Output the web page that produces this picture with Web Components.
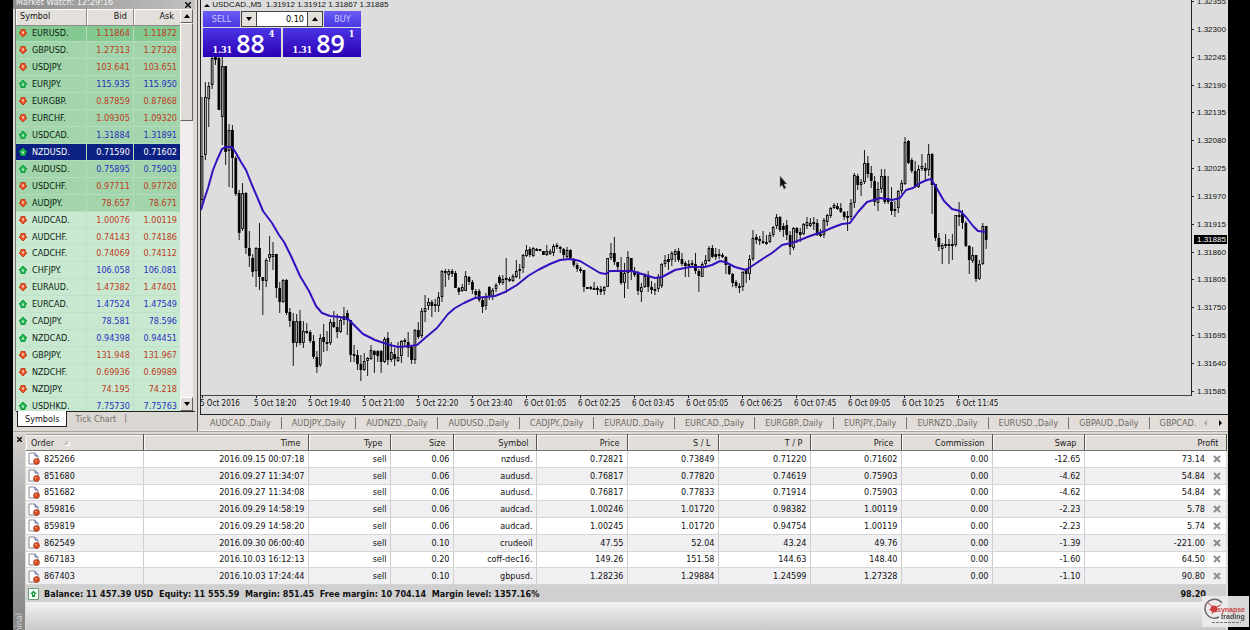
<!DOCTYPE html>
<html lang="en">
<head>
<meta charset="utf-8">
<title>Trading terminal</title>
<style>
    body {
        margin: 0;
        background: #000;
        font-family: "DejaVu Sans Condensed", "DejaVu Sans", sans-serif;
        font-size: 9px;
        line-height: 12px;
        color: #111;
    }
</style>
</head>
<body>
<trading-terminal>
    <market-watch slot="watch"></market-watch>
    <price-chart slot="chart">
        <quote-panel volume="0.10" sell="1.31 88 4" buy="1.31 89 1"></quote-panel>
    </price-chart>
    <chart-tabs slot="tabs"></chart-tabs>
    <orders-panel slot="orders"></orders-panel>
</trading-terminal>
<brand-badge></brand-badge>

<script>
/**
 * Base class: renders the component markup into an open shadow root
 */
class BaseElement extends HTMLElement {
    constructor() {
        super();
        this.attachShadow({ mode: 'open' });
    }

    connectedCallback() {
        this.shadowRoot.innerHTML = this.template();
    }
}

/**
 * TradingTerminal - application frame
 */
class TradingTerminal extends BaseElement {
    template() {
        return `
            <style>
                :host {
                    display: flex;
                    flex-direction: column;
                    min-height: 100vh;
                    margin: 0 22px 0 13px;
                    background: #dedad4;
                }
                .top {
                    display: grid;
                    grid-template-columns: 182px minmax(0, 1fr);
                    border-bottom: 1px solid #a8a5a1;
                }
                .workspace {
                    display: flex;
                    flex-direction: column;
                    margin-left: 2px;
                    border-left: 1px solid #555;
                }
                ::slotted([slot="orders"]) {
                    flex: 1;
                }
            </style>
            <div class="top">
                <slot name="watch"></slot>
                <div class="workspace">
                    <slot name="chart"></slot>
                    <slot name="tabs"></slot>
                </div>
            </div>
            <slot name="orders"></slot>
        `;
    }
}

/**
 * MarketWatch - symbol list with bid and ask prices
 */
class MarketWatch extends BaseElement {
    // symbol, bid, ask, direction
    static quotes = [
        ['EURUSD.', '1.11864', '1.11872', 'down'],
        ['GBPUSD.', '1.27313', '1.27328', 'down'],
        ['USDJPY.', '103.641', '103.651', 'down'],
        ['EURJPY.', '115.935', '115.950', 'up'],
        ['EURGBP.', '0.87859', '0.87868', 'down'],
        ['EURCHF.', '1.09305', '1.09320', 'down'],
        ['USDCAD.', '1.31884', '1.31891', 'up'],
        ['NZDUSD.', '0.71590', '0.71602', 'up'],
        ['AUDUSD.', '0.75895', '0.75903', 'up'],
        ['USDCHF.', '0.97711', '0.97720', 'down'],
        ['AUDJPY.', '78.657', '78.671', 'down'],
        ['AUDCAD.', '1.00076', '1.00119', 'down'],
        ['AUDCHF.', '0.74143', '0.74186', 'down'],
        ['CADCHF.', '0.74069', '0.74112', 'down'],
        ['CHFJPY.', '106.058', '106.081', 'up'],
        ['EURAUD.', '1.47382', '1.47401', 'down'],
        ['EURCAD.', '1.47524', '1.47549', 'up'],
        ['CADJPY.', '78.581', '78.596', 'up'],
        ['NZDCAD.', '0.94398', '0.94451', 'up'],
        ['GBPJPY.', '131.948', '131.967', 'down'],
        ['NZDCHF.', '0.69936', '0.69989', 'down'],
        ['NZDJPY.', '74.195', '74.218', 'down'],
        ['USDHKD.', '7.75730', '7.75763', 'up']
    ];

    arrow(direction) {
        const flip = direction === 'down' ? ' transform="rotate(180 5 5)"' : '';
        const fill = direction === 'down' ? '#e8582c' : '#22b853';
        const stroke = direction === 'down' ? '#c4401a' : '#149a42';
        return `
            <svg width="10" height="10" viewBox="0 0 10 10" aria-hidden="true">
                <g${flip}>
                    <path d="M5 1 L9 5 L7.500 5.500 L7 8.500 L3 8.500 L2.500 5.500 L1 5 Z" fill="${fill}" stroke="${stroke}" stroke-linejoin="round"/>
                    <path d="M4 4.500 H6 V6.500 H4 Z" fill="#fff" opacity=".7"/>
                </g>
            </svg>`;
    }

    template() {
        const rows = MarketWatch.quotes.map(([symbol, bid, ask, direction], index) => {
            const band = index === 0 ? 'first' : index < 11 ? 'major' : 'minor';
            const selected = symbol === 'NZDUSD.' ? ' selected' : '';
            return `
                <tr class="${band} ${direction}${selected}">
                    <td><span class="symbol">${this.arrow(direction)}${symbol}</span></td>
                    <td>${bid}</td>
                    <td>${ask}</td>
                </tr>`;
        }).join('');

        return `
            <style>
                :host {
                    display: flex;
                    flex-direction: column;
                    background: #dbd7d2;
                }
                header {
                    display: flex;
                    justify-content: space-between;
                    height: 9px;
                    padding: 0 4px 0 3px;
                    overflow: hidden;
                    line-height: 5px;
                    color: #f4f4f4;
                    background: linear-gradient(90deg, #8c8c8c, #c4c2c0);
                }
                button {
                    padding: 0;
                    border: 0;
                    background: none;
                    font: inherit;
                    color: #111;
                    display: flex;
                    align-items: center;
                    justify-content: center;
                }
                .list {
                    display: flex;
                    height: 402px;
                    margin: 0 2px;
                    overflow: hidden;
                    border-left: 1px solid #77746f;
                }
                table {
                    flex: 1;
                    height: 406px;
                    table-layout: fixed;
                    border-collapse: collapse;
                }
                .wide { width: 70px; }
                th {
                    height: 16px;
                    padding: 0 6px 2px 4px;
                    box-sizing: border-box;
                    font-weight: normal;
                    text-align: right;
                    background: #e3dfda;
                    border-right: 1px solid #8f8b86;
                    border-bottom: 1px solid #8f8b86;
                    box-shadow: inset 1px 1px #fff;
                }
                th:first-child { text-align: left; }
                td {
                    padding: 0 3px 0 2px;
                    text-align: right;
                    line-height: 12px;
                    border-right: 1px solid #b4dcbc;
                    border-bottom: 1px solid #b4dcbc;
                }
                td:last-child, th:last-child { border-right: 0; }
                .symbol {
                    display: flex;
                    align-items: center;
                    gap: 4px;
                    color: #0c1c12;
                }
                .first { background: #83c991; }
                .major { background: #a2d5ab; }
                .minor { background: #c8e8d0; }
                .minor td { border-color: #c0e1c9; }
                .down { color: #bf3a24; }
                .up { color: #2b30c0; }
                .selected { background: #0b2183; }
                .selected, .selected .symbol { color: #fff; }
                .scroll {
                    width: 13px;
                    display: flex;
                    flex-direction: column;
                    background: #f1edef;
                }
                .scroll button, .thumb {
                    background: #dfdbd6;
                    border: 1px solid;
                    border-color: #fff #66635f #66635f #fff;
                }
                .scroll button { height: 14px; }
                .thumb { height: 96px; }
                .track { flex: 1; }
                nav {
                    display: flex;
                    align-items: flex-start;
                    flex: 1;
                    margin-left: 3px;
                    border-top: 1px solid #222;
                    color: #75716c;
                }
                nav a {
                    padding: 1px 8px;
                    color: inherit;
                    text-decoration: none;
                }
                nav a.active {
                    margin: -1px 0 0 1px;
                    padding: 2px 7px 1px;
                    color: #111;
                    background: #fff;
                    border: 1px solid #222;
                    border-top: 0;
                }
            </style>
            <header>
                <span>Market Watch: 12:29:16</span>
                <button aria-label="Close market watch">
                    <svg width="6" height="6" viewBox="0 0 6 6"><path d="M0 0 L6 6 M6 0 L0 6" stroke="#111" stroke-width="1.5"/></svg>
                </button>
            </header>
            <div class="list">
                <table>
                    <colgroup><col class="wide"><col><col></colgroup>
                    <thead><tr><th>Symbol</th><th>Bid</th><th>Ask</th></tr></thead>
                    <tbody>${rows}</tbody>
                </table>
                <div class="scroll">
                    <button aria-label="Scroll up"><svg width="6" height="4" viewBox="0 0 6 4"><path d="M0 4 L3 0 L6 4 Z"/></svg></button>
                    <div class="thumb"></div>
                    <div class="track"></div>
                    <button aria-label="Scroll down"><svg width="6" height="4" viewBox="0 0 6 4"><path d="M0 0 L3 4 L6 0 Z"/></svg></button>
                </div>
            </div>
            <nav>
                <a href="#symbols" class="active">Symbols</a>
                <a href="#ticks">Tick Chart</a>
                <span>|</span>
            </nav>
        `;
    }
}

/**
 * QuotePanel - one click trading panel
 */
class QuotePanel extends BaseElement {
    price(side) {
        const [base, pips, point] = this.getAttribute(side).split(' ');
        return `
            <button class="price" aria-label="${side} at market">
                <span class="base">${base}</span><span class="pips">${pips}</span><span class="point">${point}</span>
            </button>`;
    }

    template() {
        return `
            <style>
                :host {
                    display: grid;
                    grid-template-columns: minmax(0, 1fr) minmax(0, 1fr);
                    gap: 1px 2px;
                    width: 158px;
                }
                .controls {
                    grid-column: 1 / 3;
                    display: grid;
                    grid-template-columns: 37px minmax(0, 1fr) 37px;
                    gap: 1px;
                    height: 16px;
                }
                button {
                    padding: 0;
                    border: 0;
                    font: inherit;
                }
                .side {
                    color: #cfcaff;
                    background: linear-gradient(#6a5cf8, #4a38e2);
                }
                .volume {
                    display: flex;
                    border: 1px solid #444;
                    background: #fff;
                }
                .volume button {
                    flex: none;
                    width: 14px;
                    background: #e4e0dc;
                    display: flex;
                    align-items: center;
                    justify-content: center;
                }
                input {
                    flex: 1;
                    width: 0;
                    min-width: 0;
                    padding: 0 3px;
                    border: 0;
                    border-left: 1px solid #444;
                    border-right: 1px solid #444;
                    font: inherit;
                    text-align: right;
                    background: #fff;
                }
                .price {
                    display: flex;
                    align-items: flex-end;
                    justify-content: center;
                    gap: 4px;
                    height: 29px;
                    padding-left: 3px;
                    color: #fff;
                    background: linear-gradient(#4a35e4, #2c00b4);
                }
                .base {
                    font-family: "DejaVu Serif Condensed", "DejaVu Serif", serif;
                    font-weight: bold;
                    line-height: 14px;
                }
                .pips {
                    font-family: "Open Sans", "Noto Sans", sans-serif;
                    font-weight: 600;
                    font-size: 25px;
                    line-height: 28px;
                }
                .point {
                    align-self: flex-start;
                    font-family: "DejaVu Serif Condensed", "DejaVu Serif", serif;
                    font-weight: bold;
                }
            </style>
            <div class="controls">
                <button class="side">SELL</button>
                <div class="volume">
                    <button aria-label="Decrease volume"><svg width="6" height="4" viewBox="0 0 6 4"><path d="M0 0 L3 4 L6 0 Z"/></svg></button>
                    <input aria-label="Volume" value="${this.getAttribute('volume')}">
                    <button aria-label="Increase volume"><svg width="6" height="4" viewBox="0 0 6 4"><path d="M0 4 L3 0 L6 4 Z"/></svg></button>
                </div>
                <button class="side">BUY</button>
            </div>
            ${this.price('sell')}
            ${this.price('buy')}
        `;
    }
}

/**
 * PriceChart - candlestick chart with moving average and axes
 */
class PriceChart extends BaseElement {
    static step = 3.38;

    // Candles as high, body top, body bottom, low, with + for a rising bar
    static candles = `
        97 156 200 205 +;82 97 155 160 +;82 86 99 127 +;57 58 85 89 +;57 57 60 65 -;57 58 110 110 -;57 66 117 145 +;66 66 152 165 -;
        124 130 151 187 +;125 130 158 188 -;156 158 194 196 -;190 193 233 240 -;183 193 229 231 +;192 193 248 254 -;231 248 256 267 -;
        254 258 272 277 -;247 248 271 287 +;223 248 277 290 -;277 277 281 315 -;258 260 281 287 +;236 254 258 262 +;242 254 257 270 +;
        254 254 288 298 -;282 288 302 313 -;279 280 302 303 +;279 280 313 315 -;308 312 321 327 -;313 321 343 366 -;314 321 343 347 +;
        310 321 343 345 -;321 331 343 348 +;323 331 332 334 -;330 332 341 343 -;335 341 357 359 -;351 357 367 373 -;334 338 365 367 +;
        324 337 342 352 -;331 342 343 351 -;319 322 343 345 +;311 322 327 328 -;314 327 332 338 -;316 320 332 333 +;307 316 320 325 +;
        310 313 320 335 -;320 320 355 362 -;345 354 355 362 -;350 355 364 370 -;355 364 370 381 -;353 361 370 371 +;357 358 361 376 +;
        345 350 359 360 +;350 351 355 373 -;350 351 356 362 -;350 351 362 373 -;337 339 362 363 +;332 338 360 365 -;342 352 360 362 +;
        348 354 359 366 -;342 357 361 362 +;340 341 356 363 +;338 340 342 347 -;332 342 348 357 -;346 347 360 364 -;329 330 360 364 +;
        322 330 337 339 -;308 311 336 338 +;295 308 312 322 +;298 302 306 310 +;300 302 306 317 -;299 304 306 312 -;292 297 306 312 +;
        270 271 297 302 +;269 271 273 287 -;269 271 275 280 +;269 271 274 277 -;271 273 288 288 -;287 288 292 295 -;284 287 291 292 +;
        271 276 291 291 +;276 277 282 285 -;280 282 290 294 -;289 291 295 297 -;289 291 300 302 -;297 300 307 313 -;293 297 306 310 +;
        286 287 296 300 -;288 290 297 300 +;283 285 289 292 +;275 277 283 285 -;275 279 283 285 +;258 278 280 293 -;277 279 281 282 +;
        274 276 281 282 +;260 271 277 278 +;264 269 271 279 -;254 255 268 273 +;245 250 256 257 +;247 249 255 257 -;247 248 256 257 +;
        248 249 250 251 -;249 249 251 251 -;251 251 255 255 -;245 251 255 256 +;249 251 254 255 +;244 246 253 256 +;243 245 247 249 -;
        246 247 249 253 -;248 249 255 260 -;247 250 257 259 +;249 250 258 260 -;258 259 265 267 -;263 265 269 272 -;267 269 271 273 -;
        270 270 287 292 -;287 287 289 289 -;286 287 289 290 -;282 288 289 290 -;286 288 290 295 -;286 289 292 295 -;286 287 291 295 +;
        258 258 287 287 +;243 253 258 260 +;237 253 262 265 -;262 262 267 270 -;257 271 283 285 -;263 273 283 298 +;251 257 273 289 +;
        258 258 271 280 -;267 271 275 277 -;271 274 291 295 -;283 287 292 302 +;273 276 287 288 +;271 275 287 292 -;281 287 290 294 -;
        283 289 291 295 +;274 277 289 292 +;263 264 286 288 +;255 260 264 267 +;254 259 262 270 -;251 253 260 266 +;249 251 255 262 +;
        248 251 260 262 -;253 259 264 266 -;261 263 266 277 -;260 264 266 277 +;260 263 265 268 -;253 264 271 274 -;269 271 276 292 -;
        262 264 277 277 +;255 260 264 268 +;246 248 261 262 +;245 248 257 258 -;248 254 257 260 -;249 254 256 259 -;253 255 256 258 -;
        256 257 265 274 -;265 266 274 275 -;273 274 283 287 -;280 282 286 288 -;283 286 288 293 -;271 272 287 291 +;268 270 274 283 -;
        255 259 274 280 +;230 238 259 261 +;234 237 240 244 -;236 239 241 245 -;231 241 242 244 -;235 242 243 245 -;232 235 242 243 +;
        226 227 235 237 +;214 217 226 229 +;216 217 230 232 -;223 226 230 237 -;220 225 235 240 -;231 235 247 255 -;227 228 248 250 +;
        227 228 233 243 -;228 232 235 242 -;223 224 234 235 +;217 222 226 229 +;218 223 226 227 +;217 222 224 230 -;219 223 235 236 -;
        229 234 236 237 -;218 220 235 238 +;214 215 222 226 +;207 208 216 218 +;203 205 208 209 +;203 206 209 210 -;203 208 212 213 -;
        211 212 217 220 -;211 216 218 231 -;199 203 217 220 +;173 175 203 208 +;174 176 185 190 -;179 182 185 196 +;150 163 182 184 +;
        156 163 174 178 -;166 173 181 188 -;176 181 202 206 -;182 189 203 211 +;169 176 189 193 +;169 176 202 204 -;176 198 202 204 -;
        187 202 211 215 -;201 209 211 217 -;190 191 208 213 +;180 183 191 194 +;137 142 184 185 +;140 141 163 164 -;158 160 171 173 -;
        161 171 187 188 -;165 169 187 188 +;154 166 169 171 +;163 168 171 180 -;144 154 170 176 +;153 154 185 214 -;184 184 238 241 -;
        233 238 247 251 -;243 245 249 264 +;234 244 246 248 -;239 244 246 264 -;234 244 245 260 -;215 215 245 247 +;202 215 216 226 -;
        210 214 223 229 -;221 223 246 247 -;245 246 260 274 -;247 255 261 263 +;255 255 279 282 -;260 264 279 280 +;223 226 264 265 +;
        226 226 240 249 -`;

    static average = `0,210 3,200 7,188 12,170 16,160 21,149 25,147 31,147 35,153 40,162 45,170 51,185 57,199 62,211
        71,223 78,235 83,242 90,256 99,276 108,291 115,306 121,313 129,316 139,317 147,319 154,326 162,334 174,340
        189,345 197,347 209,346 216,345 224,338 236,328 247,314 254,308 263,303 274,298 294,296 304,292 316,285
        327,276 337,270 349,264 359,260 369,259 379,261 389,267 399,273 405,274 409,271 431,271 444,275 454,278
        461,277 474,270 489,267 504,267 511,265 519,261 524,262 534,267 545,270 554,264 563,258 571,253 581,245
        594,242 609,236 621,232 633,227 641,224 649,223 657,212 666,202 679,198 691,200 699,198 705,190 712,188
        719,183 726,180 730,179 735,187 743,201 751,209 759,211 765,217 772,226 777,231 785,232`;

    static times = ['5 Oct 2016', '5 Oct 18:20', '5 Oct 19:40', '5 Oct 21:00', '5 Oct 22:20',
        '5 Oct 23:40', '6 Oct 01:05', '6 Oct 02:25', '6 Oct 03:45', '6 Oct 05:05',
        '6 Oct 06:25', '6 Oct 07:45', '6 Oct 09:05', '6 Oct 10:25', '6 Oct 11:45'];

    static prices = ['1.32355', '1.32300', '1.32245', '1.32190', '1.32135', '1.32080', '1.32025',
        '1.31970', '1.31915', '1.31860', '1.31805', '1.31750', '1.31695', '1.31640', '1.31585'];

    drawCandles() {
        let wicks = '';
        let bodies = '';
        PriceChart.candles.split(';').forEach((candle, index) => {
            const [high, top, bottom, low, sign] = candle.trim().split(' ');
            const x = index * PriceChart.step + 1;
            wicks += `M${x.toFixed(2)} ${high}V${low}`;
            bodies += `<rect x="${(x - 0.9).toFixed(2)}" y="${+top + 0.5}" width="1.8" height="${Math.max(bottom - top - 1, 1)}"
                fill="${sign === '+' ? '#d0d0d0' : '#000'}"/>`;
        });
        return `<g stroke="#000" stroke-width=".9" fill="none"><path d="${wicks}"/>${bodies}</g>`;
    }

    template() {
        return `
            <style>
                :host {
                    display: grid;
                    grid-template-columns: minmax(0, 1fr) 36px;
                    grid-template-rows: 396px 18px;
                    margin-left: 2px;
                    border-left: 1px solid #222;
                    border-bottom: 1px solid #222;
                    background: #dddddd;
                }
                .plot {
                    position: relative;
                    border-bottom: 1px solid #444;
                    border-right: 1px solid #222;
                }
                .plot > svg {
                    display: block;
                    width: 100%;
                    height: 100%;
                }
                .info {
                    position: absolute;
                    top: 0;
                    left: 2px;
                    font-size: 8px;
                    line-height: 10px;
                    white-space: pre;
                    font-family: "Liberation Sans", sans-serif;
                }
                ::slotted(quote-panel) {
                    position: absolute;
                    top: 11px;
                    left: 2px;
                }
                .cursor {
                    position: absolute;
                    top: 176px;
                    left: 578px;
                }
                ul {
                    margin: 0;
                    padding: 0;
                    list-style: none;
                    font-size: 8px;
                }
                .prices {
                    position: relative;
                    height: 401px;
                    margin-top: -4px;
                    display: flex;
                    flex-direction: column;
                    justify-content: space-between;
                    font-family: "Liberation Sans", sans-serif;
                    line-height: 11px;
                }
                .prices li {
                    display: flex;
                    align-items: center;
                    gap: 3px;
                }
                .prices li::before {
                    content: '';
                    width: 2px;
                    height: 1px;
                    background: #222;
                }
                .prices .current {
                    position: absolute;
                    top: 239px;
                    left: 2px;
                    right: 1px;
                    padding-left: 3px;
                    line-height: 9px;
                    color: #fff;
                    background: #000;
                }
                .prices .current::before { content: none; }
                .times {
                    display: grid;
                    grid-auto-flow: column;
                    grid-auto-columns: 54px;
                    margin-left: -1px;
                    white-space: nowrap;
                    line-height: 11px;
                }
                .times li::before {
                    content: '';
                    display: block;
                    width: 1px;
                    height: 2px;
                    margin-left: 2px;
                    background: #222;
                }
            </style>
            <div class="plot">
                <svg role="img" aria-label="USDCAD five minute chart">
                    ${this.drawCandles()}
                    <polyline points="${PriceChart.average}" fill="none" stroke="#3610bd" stroke-width="2"
                        stroke-linejoin="round"/>
                </svg>
                <div class="info"><svg width="7" height="4" viewBox="0 0 7 4"><path d="M1 4 L4 1 L7 4 Z"/></svg> USDCAD.,M5  1.31912 1.31912 1.31867 1.31885</div>
                <slot></slot>
                <svg class="cursor" style="width:9px;height:14px" viewBox="0 0 9 14" aria-hidden="true">
                    <path d="M1 0 V11 L3 9 L5 13 L7 12 L5 8 H8 Z" fill="#111" stroke="#999" stroke-width=".5"/>
                </svg>
            </div>
            <ul class="prices">
                ${PriceChart.prices.map(price => `<li>${price}</li>`).join('')}
                <li class="current">1.31885</li>
            </ul>
            <ul class="times">
                ${PriceChart.times.map(time => `<li>${time}</li>`).join('')}
            </ul>
        `;
    }
}

/**
 * ChartTabs - strip of open charts
 */
class ChartTabs extends BaseElement {
    static tabs = ['AUDCAD.,Daily', 'AUDJPY.,Daily', 'AUDNZD.,Daily', 'AUDUSD.,Daily', 'CADJPY.,Daily',
        'EURAUD.,Daily', 'EURCAD.,Daily', 'EURGBP.,Daily', 'EURJPY.,Daily', 'EURNZD.,Daily',
        'EURUSD.,Daily', 'GBPAUD.,Daily', 'GBPCAD.'];

    template() {
        return `
            <style>
                :host {
                    display: flex;
                    align-items: center;
                    height: 15px;
                    padding-left: 2px;
                    border-bottom: 1px solid #f6f4f2;
                    background: #e2ddd8;
                }
                nav {
                    display: flex;
                    flex: 1;
                    min-width: 0;
                    overflow: hidden;
                    white-space: nowrap;
                }
                a {
                    padding: 0 10px;
                    color: #6e6a66;
                    text-decoration: none;
                    border-right: 1px solid #77736e;
                }
                a:last-child {
                    padding-right: 0;
                    border: 0;
                }
                button {
                    flex: none;
                    width: 15px;
                    padding: 0;
                    border: 0;
                    background: none;
                    display: flex;
                    justify-content: center;
                }
            </style>
            <nav>${ChartTabs.tabs.map(tab => `<a href="#${tab}">${tab}</a>`).join('')}</nav>
            <button aria-label="Previous charts"><svg width="3" height="6" viewBox="0 0 3 6"><path d="M3 0 L0 3 L3 6 Z" fill="#aaa6a2"/></svg></button>
            <button aria-label="Next charts"><svg width="3" height="6" viewBox="0 0 3 6"><path d="M0 0 L3 3 L0 6 Z"/></svg></button>
        `;
    }
}

/**
 * OrdersPanel - open positions and account summary
 */
class OrdersPanel extends BaseElement {
    static columns = [['Order', 117], ['Time', 165], ['Type', 82], ['Size', 63], ['Symbol', 83], ['Price', 91],
        ['S / L', 91], ['T / P', 92], ['Price', 91], ['Commission', 91], ['Swap', 92], ['Profit', 142]];

    static orders = [
        ['825266', '2016.09.15 00:07:18', 'sell', '0.06', 'nzdusd.', '0.72821', '0.73849', '0.71220', '0.71602', '0.00', '-12.65', '73.14'],
        ['851680', '2016.09.27 11:34:07', 'sell', '0.06', 'audusd.', '0.76817', '0.77820', '0.74619', '0.75903', '0.00', '-4.62', '54.84'],
        ['851682', '2016.09.27 11:34:08', 'sell', '0.06', 'audusd.', '0.76817', '0.77833', '0.71914', '0.75903', '0.00', '-4.62', '54.84'],
        ['859816', '2016.09.29 14:58:19', 'sell', '0.06', 'audcad.', '1.00246', '1.01720', '0.98382', '1.00119', '0.00', '-2.23', '5.78'],
        ['859819', '2016.09.29 14:58:20', 'sell', '0.06', 'audcad.', '1.00245', '1.01720', '0.94754', '1.00119', '0.00', '-2.23', '5.74'],
        ['862549', '2016.09.30 06:00:40', 'sell', '0.10', 'crudeoil', '47.55', '52.04', '43.24', '49.76', '0.00', '-1.39', '-221.00'],
        ['867183', '2016.10.03 16:12:13', 'sell', '0.20', 'coff-dec16.', '149.26', '151.58', '144.63', '148.40', '0.00', '-1.60', '64.50'],
        ['867403', '2016.10.03 17:24:44', 'sell', '0.10', 'gbpusd.', '1.28236', '1.29884', '1.24599', '1.27328', '0.00', '-1.10', '90.80']
    ];

    row(order) {
        const [id, ...cells] = order;
        const profit = cells.pop();
        return `
            <tr>
                <td><span class="order">
                    <svg width="12" height="13" viewBox="0 0 12 13" aria-hidden="true">
                        <path d="M1 1 H7 L10 4 V12 H1 Z" fill="#fff" stroke="#8a8a98"/>
                        <path d="M7 1 V4 H10" fill="#cdd3ea" stroke="#5b6a9a"/>
                        <circle cx="8.5" cy="9.5" r="3" fill="#dc4a20" stroke="#a02c0a" stroke-width=".6"/>
                        <circle cx="7.8" cy="8.6" r=".9" fill="#f6a78c"/>
                    </svg>${id}</span></td>
                ${cells.map(cell => `<td>${cell}</td>`).join('')}
                <td><span class="profit">${profit}
                    <button aria-label="Close order ${id}">
                        <svg width="8" height="8" viewBox="0 0 8 8"><path d="M1 1 L7 7 M7 1 L1 7" stroke="#8e8e8e" stroke-width="2"/></svg>
                    </button></span></td>
            </tr>`;
    }

    template() {
        return `
            <style>
                :host {
                    display: grid;
                    grid-template-columns: 12px minmax(0, 1fr);
                    padding: 2px 2px 0 0;
                }
                aside {
                    display: flex;
                    flex-direction: column;
                    align-items: center;
                    justify-content: space-between;
                    overflow: hidden;
                    background: linear-gradient(#d4d1ce, #b4b4b4 30%, #858585);
                }
                aside span {
                    height: 17px;
                    writing-mode: vertical-rl;
                    transform: rotate(180deg);
                    display: flex;
                    justify-content: flex-end;
                    color: #d4d4d4;
                }
                button {
                    padding: 0;
                    border: 0;
                    background: none;
                    display: flex;
                }
                aside button { padding: 3px; }
                main {
                    display: flex;
                    flex-direction: column;
                    margin-left: 1px;
                    background: #fff;
                }
                table {
                    width: 100%;
                    height: 151px;
                    table-layout: fixed;
                    border-collapse: collapse;
                }
                th {
                    height: 16px;
                    padding: 0 7px 0 5px;
                    box-sizing: border-box;
                    font-weight: normal;
                    text-align: right;
                    color: #222;
                    background: #e1ddd8;
                    border-top: 1px solid #a09d98;
                    border-right: 1px solid #55524e;
                    border-bottom: 1px solid #77746f;
                    box-shadow: inset 1px 1px #faf8f6;
                }
                td {
                    padding: 0 3px;
                    text-align: right;
                    border-right: 1px solid #cfcfcf;
                    border-bottom: 1px solid #d6d6d6;
                }
                td:first-child { padding-left: 2px; }
                th:first-child { text-align: left; }
                td:last-child { border-right: 0; }
                tbody tr:nth-child(even) { background: #f0eff1; }
                .order, .profit {
                    display: flex;
                    align-items: center;
                    gap: 4px;
                }
                .profit {
                    justify-content: flex-end;
                    gap: 8px;
                    padding-right: 2px;
                }
                .sort { margin-left: 10px; }
                .summary {
                    display: flex;
                    align-items: center;
                    gap: 5px;
                    height: 17px;
                    padding: 0 20px 0 2px;
                    font-weight: bold;
                    background: #d0d0d0;
                }
                .summary p {
                    flex: 1;
                    margin: 0;
                    white-space: pre;
                }
                .rest {
                    flex: 1;
                    min-height: 20px;
                    background: linear-gradient(#f2f2f2, #c9c9c9);
                }
            </style>
            <aside>
                <button aria-label="Close terminal">
                    <svg width="5" height="5" viewBox="0 0 5 5"><path d="M0 0 L5 5 M5 0 L0 5" stroke="#111" stroke-width="1.5"/></svg>
                </button>
                <span>Terminal</span>
            </aside>
            <main>
                <table>
                    <colgroup>${OrdersPanel.columns.map(([, width]) => `<col style="width:${width}px">`).join('')}</colgroup>
                    <thead><tr>${OrdersPanel.columns.map(([name], index) => `<th>${name}${index === 0
                        ? '<svg class="sort" width="7" height="6" viewBox="0 0 7 6"><path d="M1 5 L4 1" stroke="#999"/><path d="M4 1 L6.500 5.500 H1" stroke="#fff" fill="none"/></svg>'
                        : ''}</th>`).join('')}</tr></thead>
                    <tbody>${OrdersPanel.orders.map(order => this.row(order)).join('')}</tbody>
                </table>
                <div class="summary">
                    <svg width="11" height="12" viewBox="0 0 11 12" aria-hidden="true">
                        <path d="M.5 .5 H10.5 V11.500 H.5 Z" fill="#f6fff8" stroke="#6e9c78"/>
                        <path d="M5.500 2.500 L9 6 H7 V9 H4 V6 H2 Z" fill="#169c3e"/>
                        <path d="M5 5 H6 V7 H5 Z" fill="#fff"/>
                    </svg>
                    <p>Balance: 11 457.39 USD  Equity: 11 555.59  Margin: 851.45  Free margin: 10 704.14  Margin level: 1357.16%</p>
                    <span>98.20</span>
                </div>
                <div class="rest"></div>
            </main>
        `;
    }
}

/**
 * BrandBadge - logo floating over the lower right corner
 */
class BrandBadge extends BaseElement {
    template() {
        return `
            <style>
                :host {
                    position: fixed;
                    right: 1px;
                    bottom: 3px;
                    width: 47px;
                    height: 31px;
                    background: rgba(235, 235, 235, .92);
                }
                svg { display: block; }
                text {
                    font-family: "Liberation Sans", sans-serif;
                    font-weight: bold;
                    font-size: 7px;
                }
            </style>
            <svg width="47" height="31" viewBox="0 0 47 31" role="img" aria-label="synapse trading">
                <path d="M20 7 A9.500 9.500 0 1 0 17 21" fill="none" stroke="#6b6770" stroke-width="1.5"/>
                <path d="M5 6 L12 12 L19 9 M12 12 L10 18 M12 12 L7 14" stroke="#cc4a48" fill="none"/>
                <circle cx="12" cy="13" r="3.500" fill="#cc3f3f"/>
                <text x="15" y="16" fill="#c84444">synapse</text>
                <text x="19" y="23" fill="#4c484c">trading</text>
                <path d="M10 26.500 H39" stroke="#777" stroke-dasharray="3 1"/>
            </svg>
        `;
    }
}

customElements.define('trading-terminal', TradingTerminal);
customElements.define('market-watch', MarketWatch);
customElements.define('quote-panel', QuotePanel);
customElements.define('price-chart', PriceChart);
customElements.define('chart-tabs', ChartTabs);
customElements.define('orders-panel', OrdersPanel);
customElements.define('brand-badge', BrandBadge);
</script>
</body>
</html>
